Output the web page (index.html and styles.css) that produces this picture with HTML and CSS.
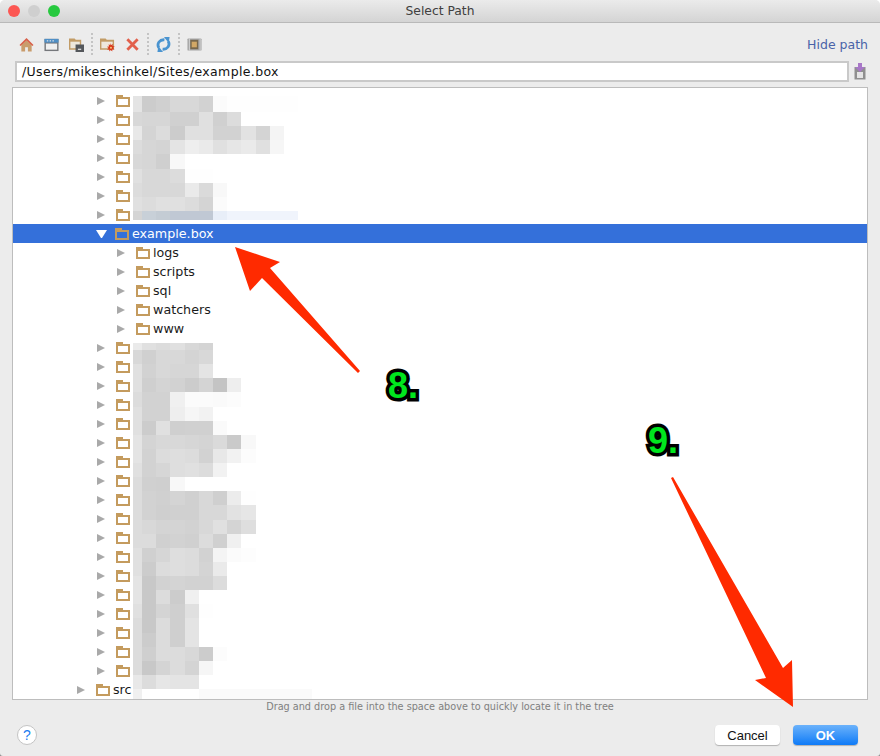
FILE: index.html
```html
<!DOCTYPE html>
<html lang="en">
<head>
    <meta charset="UTF-8">
    <title>Select Path</title>
    <link rel="stylesheet" href="styles.css">
</head>
<body>
    <div class="window">
        <div class="titlebar">
            <div class="lights">
                <span class="light red"></span>
                <span class="light grey"></span>
                <span class="light green"></span>
            </div>
            <div class="title">Select Path</div>
        </div>

        <div class="toolbar">
            <!-- home -->
            <svg class="tool" viewBox="0 0 16 16">
                <path d="M2.500 8.500V15.500h4v-4.500h3v4.500h4V8.500L8 3.500z" fill="#c99c6c"/>
                <path d="M0.500 8.500 8 1l7.500 7.500-1.200 1.200L8 3.600 1.700 9.700z" fill="#d8614c"/>
            </svg>
            <!-- window -->
            <svg class="tool" viewBox="0 0 16 16">
                <rect x="0.500" y="2" width="15" height="13" fill="#75777b"/>
                <rect x="0.500" y="2" width="15" height="4" fill="#4f8fc6"/>
                <rect x="2" y="7" width="12" height="6.500" fill="#f0f0f0"/>
                <rect x="3" y="3.500" width="1.500" height="1.200" fill="#e8e8e8"/>
                <rect x="6" y="3.500" width="1.500" height="1.200" fill="#e8e8e8"/>
                <rect x="9" y="3.500" width="1.500" height="1.200" fill="#e8e8e8"/>
            </svg>
            <!-- project folder -->
            <svg class="tool wide" viewBox="0 0 16 16">
                <path d="M0 1.500h6l1.200 1.500H13v10.500H0z" fill="#c29c66"/>
                <rect x="1.500" y="5" width="10" height="7" fill="#eee8dc"/>
                <rect x="7" y="8" width="9" height="8" fill="#54575b"/>
                <rect x="9.500" y="12.500" width="3.500" height="1.200" fill="#eeeeee"/>
            </svg>
            <span class="sep"></span>
            <!-- new folder -->
            <svg class="tool wide" viewBox="0 0 16 16">
                <path d="M0 1.500h6l1.200 1.500H15v10.500H0z" fill="#c29c66"/>
                <rect x="1.500" y="5" width="12" height="7" fill="#eee8dc"/>
                <path d="M11 6.500l.9 2.100 1.900-1.200-.4 2.300 2.300.3-1.800 1.500 1.500 1.700-2.300-.1v2.300l-1.600-1.600-1.600 1.600V13.400l-2.300.1 1.500-1.700-1.800-1.500 2.300-.3-.4-2.300 1.900 1.200z" fill="#d9381a"/>
                <circle cx="11.700" cy="11.500" r="1" fill="#f5d080"/>
            </svg>
            <!-- delete -->
            <svg class="tool" viewBox="0 0 16 16">
                <path d="M2.500 2.500l11 11M13.500 2.500l-11 11" stroke="#e2604c" stroke-width="3" fill="none"/>
            </svg>
            <span class="sep"></span>
            <!-- refresh -->
            <svg class="tool wide" viewBox="0 0 16 16">
                <path d="M3 11.500C0.500 7 4 2.500 9 3" stroke="#4a94d0" stroke-width="3" fill="none"/>
                <path d="M8.500 0l6 0-1 6.500z" fill="#4a94d0"/>
                <path d="M13 4.500c2.500 4.500-1 9-6 8.500" stroke="#4a94d0" stroke-width="3" fill="none"/>
                <path d="M7.500 16l-6 0 1-6.500z" fill="#4a94d0"/>
            </svg>
            <span class="sep"></span>
            <!-- show hidden -->
            <svg class="tool wide" viewBox="0 0 16 16">
                <rect x="0.500" y="1.500" width="15" height="13" rx="1" fill="#a4a4a4"/>
                <rect x="2" y="1.500" width="1" height="13" fill="#d4d4d4"/>
                <rect x="13.500" y="1.500" width="1" height="13" fill="#d4d4d4"/>
                <rect x="3.500" y="3" width="8.500" height="10" fill="#77674c"/>
                <rect x="5" y="5" width="5.500" height="6" fill="#d2a866"/>
            </svg>
            <a class="hide-path">Hide path</a>
        </div>

        <div class="path-row">
            <div class="path-input">/Users/mikeschinkel/Sites/example.box</div>
            <svg class="paste" viewBox="0 0 12 17">
                <rect x="0.500" y="4" width="11" height="12.500" fill="#8f8f8f"/>
                <rect x="3" y="9" width="6" height="6" fill="#e4e4e4"/>
                <path d="M4 0h4v4h3L6 9 1 4h3z" fill="#a877c8"/>
            </svg>
        </div>

        <div class="tree">
            <div class="row lvl1"><i class="tri"></i><i class="folder"></i></div>
            <div class="row lvl1"><i class="tri"></i><i class="folder"></i></div>
            <div class="row lvl1"><i class="tri"></i><i class="folder"></i></div>
            <div class="row lvl1"><i class="tri"></i><i class="folder"></i></div>
            <div class="row lvl1"><i class="tri"></i><i class="folder"></i></div>
            <div class="row lvl1"><i class="tri"></i><i class="folder"></i></div>
            <div class="row lvl1"><i class="tri"></i><i class="folder"></i></div>
            <div class="row lvl1 selected"><i class="tri open"></i><i class="folder"></i><span>example.box</span></div>
            <div class="row lvl2"><i class="tri"></i><i class="folder"></i><span>logs</span></div>
            <div class="row lvl2"><i class="tri"></i><i class="folder"></i><span>scripts</span></div>
            <div class="row lvl2"><i class="tri"></i><i class="folder"></i><span>sql</span></div>
            <div class="row lvl2"><i class="tri"></i><i class="folder"></i><span>watchers</span></div>
            <div class="row lvl2"><i class="tri"></i><i class="folder"></i><span>www</span></div>
            <div class="row lvl1"><i class="tri"></i><i class="folder"></i></div>
            <div class="row lvl1"><i class="tri"></i><i class="folder"></i></div>
            <div class="row lvl1"><i class="tri"></i><i class="folder"></i></div>
            <div class="row lvl1"><i class="tri"></i><i class="folder"></i></div>
            <div class="row lvl1"><i class="tri"></i><i class="folder"></i></div>
            <div class="row lvl1"><i class="tri"></i><i class="folder"></i></div>
            <div class="row lvl1"><i class="tri"></i><i class="folder"></i></div>
            <div class="row lvl1"><i class="tri"></i><i class="folder"></i></div>
            <div class="row lvl1"><i class="tri"></i><i class="folder"></i></div>
            <div class="row lvl1"><i class="tri"></i><i class="folder"></i></div>
            <div class="row lvl1"><i class="tri"></i><i class="folder"></i></div>
            <div class="row lvl1"><i class="tri"></i><i class="folder"></i></div>
            <div class="row lvl1"><i class="tri"></i><i class="folder"></i></div>
            <div class="row lvl1"><i class="tri"></i><i class="folder"></i></div>
            <div class="row lvl1"><i class="tri"></i><i class="folder"></i></div>
            <div class="row lvl1"><i class="tri"></i><i class="folder"></i></div>
            <div class="row lvl1"><i class="tri"></i><i class="folder"></i></div>
            <div class="row lvl1"><i class="tri"></i><i class="folder"></i></div>
            <div class="row lvl0"><i class="tri"></i><i class="folder"></i><span>src</span></div>
            <div id="mosaicTop" class="mosaic mosaic-top"></div>
            <div id="mosaicBottom" class="mosaic mosaic-bottom"></div>
        </div>

        <div class="hint">Drag and drop a file into the space above to quickly locate it in the tree</div>

        <div class="footer">
            <button class="help">?</button>
            <div class="actions">
                <button class="btn">Cancel</button>
                <button class="btn primary">OK</button>
            </div>
        </div>

        <!-- annotations drawn on top of the screenshot -->
        <svg class="arrows" viewBox="0 0 880 756">
            <polygon points="235,247 280,262 270,268 360,371 358,373 262,278 250,291"/>
            <polygon points="671,478 673,477 783,668 792,660 793,707 755,680 766,678"/>
        </svg>
        <div class="step step-8">8.</div>
        <div class="step step-9">9.</div>
    </div>

    <script src="mosaic.js"></script>
</body>
</html>
```

FILE: styles.css
```css
* { box-sizing: border-box; }

html, body {
    margin: 0;
    height: 756px;
    overflow: hidden;
}

body {
    background: linear-gradient(#ffffff 50%, #8c8c8c 50%);
}

.window {
    position: relative;
    display: flex;
    flex-direction: column;
    width: 880px;
    height: 756px;
    background: #ececec;
    border-radius: 5px 5px 3px 3px;
    overflow: hidden;
    font-family: "DejaVu Sans", sans-serif;
    font-size: 12px;
    color: #1a1a1a;
}

.titlebar {
    position: relative;
    display: flex;
    align-items: center;
    justify-content: center;
    flex: none;
    height: 23px;
    background: linear-gradient(#ebebeb, #d4d4d4);
    border-bottom: 1px solid #b9b9b9;
}
.title { color: #404040; font-size: 12.300px; }
.lights {
    position: absolute;
    left: 8px;
    top: 5px;
    display: flex;
    gap: 8px;
}
.light {
    width: 12px;
    height: 12px;
    border-radius: 50%;
}
.red { background: #fc5753; }
.grey { background: #cfcfcf; }
.green { background: #27c93f; }

.toolbar {
    display: flex;
    align-items: center;
    flex: none;
    height: 38px;
    padding: 4px 12px 0 19px;
}
.tool {
    flex: none;
    width: 15px;
    height: 15px;
    margin-right: 10px;
}
.tool.wide { width: 15px; margin-right: 10px; }
.sep {
    flex: none;
    width: 0;
    height: 22px;
    margin: 0 7px 0 -3px;
    border-left: 2px dotted #c4c4c4;
}
.hide-path {
    margin-left: auto;
    color: #4a63a8;
    font-size: 12.500px;
}

.path-row {
    display: flex;
    align-items: center;
    flex: none;
    height: 21px;
    padding: 0 14px 0 15px;
}
.path-input {
    flex: 1;
    height: 21px;
    line-height: 18px;
    padding-left: 5px;
    background: #ffffff;
    border: 2px solid #c9c9c9;
    color: #111111;
    font-size: 12.500px;
    letter-spacing: 0.360px;
}
.paste {
    flex: none;
    width: 12px;
    height: 17px;
    margin-left: 5px;
}

.tree {
    position: relative;
    flex: none;
    height: 613px;
    margin: 5px 12px 0 12px;
    padding-top: 3px;
    background: #ffffff;
    border: 1px solid #bdbdbd;
    overflow: hidden;
}
.row {
    display: flex;
    align-items: center;
    height: 19px;
    font-size: 12.700px;
    white-space: nowrap;
}
.row span { margin-left: 3px; }
.lvl0 { padding-left: 64px; }
.lvl1 { padding-left: 84px; }
.lvl2 { padding-left: 104px; }
.selected { background: #3470da; color: #ffffff; }

.tri {
    flex: none;
    width: 0;
    height: 0;
    margin-right: 11px;
    border-left: 8px solid #a9a9a9;
    border-top: 4.500px solid transparent;
    border-bottom: 4.500px solid transparent;
}
.tri.open {
    width: 11px;
    margin-right: 8px;
    margin-left: -1px;
    border-left: 5.500px solid transparent;
    border-right: 5.500px solid transparent;
    border-top: 8px solid #ffffff;
    border-bottom: 0;
}

.folder {
    position: relative;
    flex: none;
    width: 14px;
    height: 10px;
    margin-top: 2px;
    border: 2px solid #c49b5e;
}
.folder::before {
    content: "";
    position: absolute;
    left: -2px;
    top: -4px;
    width: 7px;
    height: 3px;
    background: #c49b5e;
}

/* blurred out folder names */
.mosaic {
    position: absolute;
    left: 120px;
    display: grid;
    grid-template-columns: 9px repeat(12, 14.200px);
    grid-auto-rows: 14.130px;
    filter: blur(0.500px);
}
.mosaic-top {
    top: 8px;
    grid-template-rows: 16px repeat(7, 14.130px) 9px;
}
.mosaic-bottom {
    top: 255px;
    grid-template-rows: 7px;
}

.hint {
    flex: none;
    height: 14px;
    line-height: 14px;
    text-align: center;
    color: #808080;
    font-size: 9.700px;
}

.footer {
    display: flex;
    align-items: flex-start;
    justify-content: space-between;
    flex: none;
    padding: 11px 22px 0 17px;
}
.actions { display: flex; gap: 13px; }
button { font-family: "Liberation Sans", sans-serif; padding: 0; }
.help {
    width: 20px;
    height: 20px;
    border: 1px solid #c4c4c4;
    border-radius: 50%;
    background: #ffffff;
    color: #1b7cf0;
    font-size: 14px;
}
.btn {
    width: 65px;
    height: 20px;
    border: none;
    border-radius: 4px;
    background: #ffffff;
    box-shadow: 0 1px 1px rgba(0,0,0,0.25);
    color: #111111;
    font-size: 13px;
}
.btn.primary {
    background: linear-gradient(#6bb2fb, #0f7bf7);
    color: #ffffff;
    font-weight: bold;
}

.arrows {
    position: absolute;
    left: 0;
    top: 0;
    width: 880px;
    height: 756px;
    fill: #ff2a00;
    pointer-events: none;
}
.step {
    position: absolute;
    font-family: "Liberation Sans", sans-serif;
    font-size: 36px;
    font-weight: bold;
    line-height: 40px;
    color: #00e61e;
    -webkit-text-stroke: 7px #000000;
    paint-order: stroke fill;
}
.step-8 { left: 388px; top: 366px; }
.step-9 { left: 648px; top: 421px; }
```

FILE: mosaic.js
```js
// grey level of each blurred cell, left to right, one line per row
const topRows = [
    'e4 cc d0 d8 d8 d2 fb fe fe fe fe fe',
    'd8 d6 d6 d0 d0 e0 d0 dc ff',
    'e8 d4 dc cc e0 e0 d2 d2 e2 d4 f4',
    'dc d6 d4 e4 ee ea e0 e6 ea e0 f6',
    'd8 d6 cf f8',
    'e0 d8 d8 dc fe fe',
    'dc d8 d8 d8 ea da f8',
    'e0 dc e0 e0 dc d4 fb',
    'd4 c8d0d8 c4ccd4 c0c8d4 c0c8d4 c0c8d4 e8eef8 f0f4fc f0f4fc f0f4fc f0f4fc f0f4fc'
];

// first line is the thin strip of half hidden text above the blocks
const bottomRows = [
    'ea e0 dc e0 d8 d4',
    'd8 d0 d8 d8 d4 d8',
    'e0 d2 d8 d6 d6 e4',
    'e0 cf d4 d2 cc d4 c4 ee',
    'dc d2 d2 f0 fb fb fa fc',
    'e0 d2 d2 ee f6 f2',
    'e0 cc e0 cf d0 d0 fa',
    'e4 d4 d8 d8 d6 d4 da ca f8',
    'e4 d2 dc de dc d2 e8 f2 fc',
    'e0 d2 d6 de e0 dc f2',
    'dc d0 cf f8',
    'dc d2 d0 d4 d0 d8 cf ec fe',
    'dc d2 cf d0 d0 d8 d8 e2 e6',
    'dc d8 d4 d4 d2 d8 e0 d4 de',
    'dc dc d0 d2 d0 dc d0 f0',
    'e0 d0 d6 de dc d2 f4 fb fd',
    'e0 cc dc de dc d4 ea',
    'e4 c8 d2 d4 d2 d2 dc',
    'e4 c8 dc cc f0',
    'e0 c8 d4 cf e0 fe',
    'dc c8 dc cf e4',
    'dc cc dc cf e4',
    'dc cf dc dc d8 cc fc',
    'dc c8 d4 dc d4 f6',
    'e8 dc e6 e4 e4',
    'f0 ff ff ff ff fa fa fa fa fa fa fa fa'
];

function fillMosaic(el, rows) {
    rows.forEach(function(row, y) {
        row.split(' ').forEach(function(value, x) {
            const cell = document.createElement('div');
            const color = value.length === 2 ? value + value + value : value;
            cell.style.background = '#' + color;
            cell.style.gridRow = y + 1;
            cell.style.gridColumn = x + 1;
            el.appendChild(cell);
        });
    });
}

fillMosaic(document.getElementById('mosaicTop'), topRows);
fillMosaic(document.getElementById('mosaicBottom'), bottomRows);
```
